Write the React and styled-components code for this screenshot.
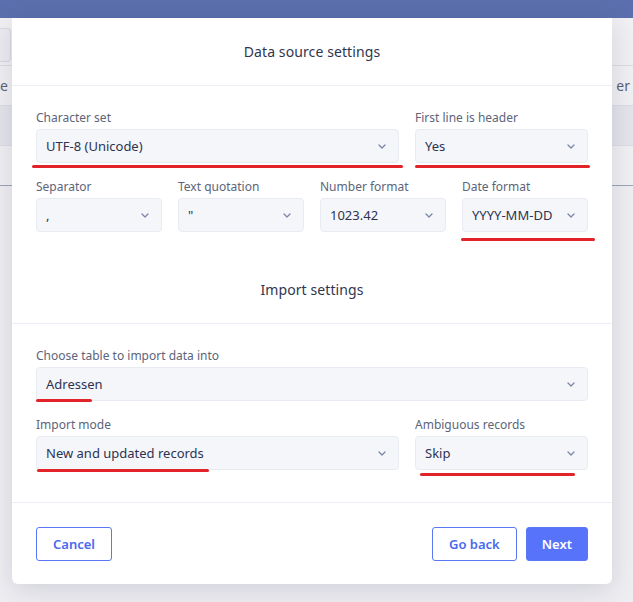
import React from 'react'
import styled, { createGlobalStyle } from 'styled-components'

const Global = createGlobalStyle`
    body {
        margin: 0;
        font-family: "Noto Sans", "Open Sans", sans-serif;
        background: #efeff3;
    }
`

const Screen = styled.div`
    position: relative;
    width: 633px;
    height: 602px;
    overflow: hidden;
    background: #efeff3;
`

const TopBar = styled.div`
    height: 18px;
    background: #5b6fae;
`

const Toolbar = styled.div`
    height: 47px;
    display: flex;
    align-items: center;
    border-bottom: 1px solid #dcdde4;
    background: #f1f1f4;
`

const GhostButton = styled.div`
    width: 10px;
    height: 32px;
    margin-top: 6px;
    border: 1px solid #d9dae2;
    border-left: none;
    border-radius: 0 4px 4px 0;
    background: #ececf1;
`

const Row = styled.div`
    height: 39px;
    display: flex;
    align-items: center;
    justify-content: space-between;
    padding-right: 3px;
    border-bottom: 1px solid ${p => p.$dark ? '#9ea3bc' : '#dcdde4'};
    background: ${p => p.$shade ? '#e4e5ec' : '#f1f1f4'};
    color: #5d6276;
    font-size: 14px;
`

const Modal = styled.div`
    position: absolute;
    left: 12px;
    top: 18px;
    width: 600px;
    background: #fff;
    border-radius: 0 0 6px 6px;
    box-shadow: 0 6px 28px rgba(35, 40, 70, 0.16);
`

const SectionHead = styled.div`
    height: 67px;
    display: flex;
    align-items: center;
    justify-content: center;
    border-bottom: 1px solid #eceef5;
    color: #2f364f;
    font-size: 14px;
    letter-spacing: 0.1px;
`

const Body = styled.div`
    padding: ${p => p.$top || 24}px 24px ${p => p.$bottom || 24}px;
    display: flex;
    flex-direction: column;
    gap: 16px;
    border-bottom: ${p => p.$line ? '1px solid #eceef5' : 'none'};
`

const Grid = styled.div`
    display: grid;
    grid-template-columns: ${p => p.$cols};
    column-gap: 16px;
`

const Field = styled.div`
    position: relative;
    display: flex;
    flex-direction: column;
    min-width: 0;
`

const Label = styled.label`
    font-size: 12px;
    line-height: 16px;
    color: #5c6479;
    margin-bottom: 3px;
`

const SelectBox = styled.div`
    height: 32px;
    box-sizing: content-box;
    border: 1px solid #e9ebf3;
    border-radius: 4px;
    background: #f5f6fa;
    display: flex;
    align-items: center;
    justify-content: space-between;
    padding: 0 12px 0 9px;
    color: #2c3350;
    font-size: 13px;
`

const Marker = styled.span`
    position: absolute;
    left: ${p => p.$left}px;
    width: ${p => p.$width}px;
    top: calc(100% + ${p => p.$top}px);
    height: 3px;
    border-radius: 2px;
    background: #e3232a;
`

const Footer = styled.div`
    padding: 24px 24px 23px;
    display: flex;
    align-items: center;
    gap: 9px;
`

const Spacer = styled.div`
    flex: 1;
`

const Button = styled.button`
    box-sizing: border-box;
    height: 34px;
    padding: 0 ${p => p.$pad}px;
    border-radius: 3px;
    border: 1px solid #5a77f5;
    background: ${p => p.$primary ? '#5673fa' : '#fff'};
    color: ${p => p.$primary ? '#fff' : '#4a69ef'};
    font-family: "Noto Sans", "Open Sans", sans-serif;
    font-size: 13px;
    font-weight: 600;
    cursor: pointer;
`

const Chevron = () => (
    <svg width="8" height="5" viewBox="0 0 8 5">
        <polyline points="1,1 4,4 7,1" fill="none" stroke="#7b85a8" strokeWidth="1.3" strokeLinecap="round" strokeLinejoin="round" />
    </svg>
)

const Select = ({ label, value, marker }) => (
    <Field>
        <Label>{label}</Label>
        <SelectBox>
            <span>{value}</span>
            <Chevron />
        </SelectBox>
        {marker && <Marker $left={marker[0]} $width={marker[1]} $top={marker[2]} />}
    </Field>
)

export default function App() {
    return (
        <Screen>
            <Global />
            <TopBar />
            <Toolbar>
                <GhostButton />
            </Toolbar>
            <Row><span>e</span><span>er</span></Row>
            <Row $shade />
            <Row $dark />

            <Modal>
                <SectionHead>Data source settings</SectionHead>
                <Body $bottom={24}>
                    <Grid $cols="1fr 173px">
                        <Select label="Character set" value="UTF-8 (Unicode)" marker={[-4, 371, 2]} />
                        <Select label="First line is header" value="Yes" marker={[0, 175, 2]} />
                    </Grid>
                    <Grid $cols="repeat(4, 1fr)">
                        <Select label="Separator" value="," />
                        <Select label="Text quotation" value={'"'} />
                        <Select label="Number format" value="1023.42" />
                        <Select label="Date format" value="YYYY-MM-DD" marker={[-1, 134, 6]} />
                    </Grid>
                </Body>
                <SectionHead>Import settings</SectionHead>
                <Body $bottom={32} $line>
                    <Grid $cols="1fr">
                        <Select label="Choose table to import data into" value="Adressen" marker={[0, 56, -2]} />
                    </Grid>
                    <Grid $cols="1fr 173px">
                        <Select label="Import mode" value="New and updated records" marker={[1, 172, -1]} />
                        <Select label="Ambiguous records" value="Skip" marker={[5, 155, 3]} />
                    </Grid>
                </Body>
                <Footer>
                    <Button $pad={16}>Cancel</Button>
                    <Spacer />
                    <Button $pad={16}>Go back</Button>
                    <Button $primary $pad={15}>Next</Button>
                </Footer>
            </Modal>
        </Screen>
    )
}
